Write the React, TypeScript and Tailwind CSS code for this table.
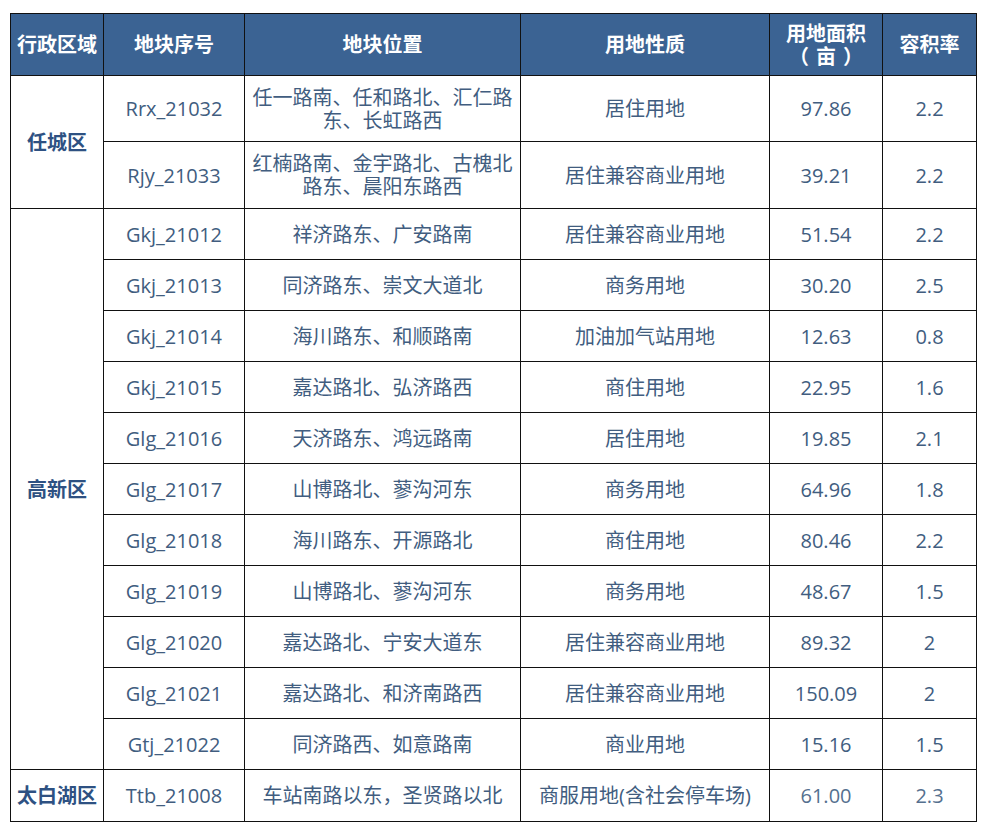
import React from "react";

type Row = {
  code: string;
  loc: React.ReactNode;
  use: string;
  area: string;
  far: string;
};

const renCheng: Row[] = [
  {
    code: "Rrx_21032",
    loc: (
      <>
        任一路南、任和路北、汇仁路
        <br />
        东、长虹路西
      </>
    ),
    use: "居住用地",
    area: "97.86",
    far: "2.2",
  },
  {
    code: "Rjy_21033",
    loc: (
      <>
        红楠路南、金宇路北、古槐北
        <br />
        路东、晨阳东路西
      </>
    ),
    use: "居住兼容商业用地",
    area: "39.21",
    far: "2.2",
  },
];

const gaoXin: Row[] = [
  { code: "Gkj_21012", loc: "祥济路东、广安路南", use: "居住兼容商业用地", area: "51.54", far: "2.2" },
  { code: "Gkj_21013", loc: "同济路东、崇文大道北", use: "商务用地", area: "30.20", far: "2.5" },
  { code: "Gkj_21014", loc: "海川路东、和顺路南", use: "加油加气站用地", area: "12.63", far: "0.8" },
  { code: "Gkj_21015", loc: "嘉达路北、弘济路西", use: "商住用地", area: "22.95", far: "1.6" },
  { code: "Glg_21016", loc: "天济路东、鸿远路南", use: "居住用地", area: "19.85", far: "2.1" },
  { code: "Glg_21017", loc: "山博路北、蓼沟河东", use: "商务用地", area: "64.96", far: "1.8" },
  { code: "Glg_21018", loc: "海川路东、开源路北", use: "商住用地", area: "80.46", far: "2.2" },
  { code: "Glg_21019", loc: "山博路北、蓼沟河东", use: "商务用地", area: "48.67", far: "1.5" },
  { code: "Glg_21020", loc: "嘉达路北、宁安大道东", use: "居住兼容商业用地", area: "89.32", far: "2" },
  { code: "Glg_21021", loc: "嘉达路北、和济南路西", use: "居住兼容商业用地", area: "150.09", far: "2" },
  { code: "Gtj_21022", loc: "同济路西、如意路南", use: "商业用地", area: "15.16", far: "1.5" },
];

const td = "border border-[#111] text-center align-middle px-1 leading-[23px]";
const th = "border border-[#111] text-center align-middle font-bold text-white leading-[23px] px-1";

function Cells({ r }: { r: Row }) {
  return (
    <>
      <td className={td}>{r.code}</td>
      <td className={td}>{r.loc}</td>
      <td className={td}>{r.use}</td>
      <td className={td}>{r.area}</td>
      <td className={td}>{r.far}</td>
    </>
  );
}

export default function App() {
  return (
    <div
      className="min-h-[828px] w-[993px] bg-white pt-[13px] pl-[10px]"
      style={{ fontFamily: '"Open Sans", "Noto Sans CJK SC", sans-serif' }}
    >
      <table className="table-fixed border-collapse w-[966px] text-[20px] text-[#415d7f]">
        <colgroup>
          <col className="w-[93px]" />
          <col className="w-[141px]" />
          <col className="w-[276px]" />
          <col className="w-[249px]" />
          <col className="w-[113px]" />
          <col className="w-[94px]" />
        </colgroup>
        <thead>
          <tr className="h-[62px] bg-[#3b6393]">
            <th className={th}>行政区域</th>
            <th className={th}>地块序号</th>
            <th className={th}>地块位置</th>
            <th className={th}>用地性质</th>
            <th className={th}>
              用地面积
              <br />
              （<span className="px-[7px]">亩</span>）
            </th>
            <th className={th}>容积率</th>
          </tr>
        </thead>
        <tbody>
          {renCheng.map((r, i) => (
            <tr key={r.code} className={i === 0 ? "h-[66px]" : "h-[67px]"}>
              {i === 0 && (
                <td rowSpan={2} className={`${td} font-bold text-[#2e5182]`}>
                  任城区
                </td>
              )}
              <Cells r={r} />
            </tr>
          ))}
          {gaoXin.map((r, i) => (
            <tr key={r.code} className="h-[51px]">
              {i === 0 && (
                <td rowSpan={gaoXin.length} className={`${td} font-bold text-[#2e5182]`}>
                  高新区
                </td>
              )}
              <Cells r={r} />
            </tr>
          ))}
          <tr className="h-[52px]">
            <td className={`${td} font-bold text-[#2e5182] whitespace-nowrap`}>太白湖区</td>
            <td className={td}>Ttb_21008</td>
            <td className={`${td} whitespace-nowrap`}>车站南路以东，圣贤路以北</td>
            <td className={`${td} whitespace-nowrap`}>商服用地(含社会停车场)</td>
            <td className={`${td} text-[#55708f]`}>61.00</td>
            <td className={`${td} text-[#55708f]`}>2.3</td>
          </tr>
        </tbody>
      </table>
    </div>
  );
}
